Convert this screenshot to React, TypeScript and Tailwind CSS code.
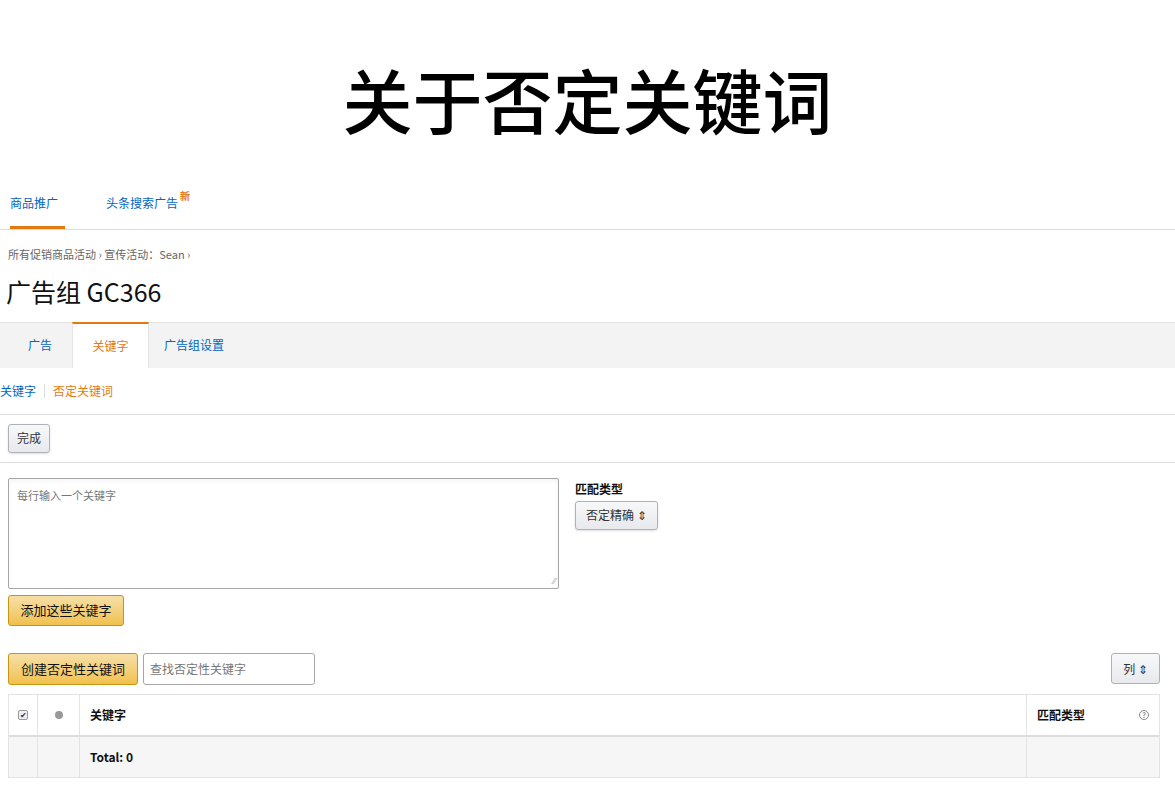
import React from "react";

const F = { fontFamily: '"Noto Sans CJK SC", "Liberation Sans", sans-serif' };

export default function App() {
  return (
    <div className="w-[1175px] h-[802px] bg-white overflow-hidden text-[#333]" style={F}>
      <div className="h-[180px] flex items-center justify-center pt-[18px]">
        <h1 className="text-[70px] leading-none font-medium text-black tracking-[0px]">关于否定关键词</h1>
      </div>
      <div className="flex items-end h-[50px] border-b border-[#ddd] text-[12px]">
        <div className="ml-[10px] w-[55px] pb-[14px] border-b-[3px] border-[#e47911] text-[#0066c0]">商品推广</div>
        <div className="ml-[41px] pb-[17px] text-[#0066c0] relative">头条搜索广告<span className="absolute -top-[6px] -right-[12px] text-[10px] font-bold text-[#e47911]">新</span></div>
      </div>
      <div className="pl-[8px] pt-[16px] text-[11px] text-[#666]">所有促销商品活动 › 宣传活动：Sean ›</div>
      <div className="pl-[6px] pt-[10px] text-[25px] text-[#111] leading-[36px]">广告组 GC366</div>
      <div className="mt-[13px] h-[46px] bg-[#f3f3f3] border-t border-[#e3e3e3] flex text-[12px] pl-[8px]">
        <div className="w-[64px] flex items-center justify-center text-[#0066c0]">广告</div>
        <div className="w-[77px] flex items-center justify-center bg-white border-t-2 border-[#e47911] border-x border-x-[#e3e3e3] -mt-px text-[#e47911]">关键字</div>
        <div className="w-[90px] flex items-center justify-center text-[#0066c0]">广告组设置</div>
      </div>
      <div className="h-[47px] border-b border-[#ddd] flex items-center text-[12px]">
        <span className="text-[#0066c0]">关键字</span>
        <span className="mx-[8px] h-[14px] border-l border-[#ddd]" />
        <span className="text-[#e47911]">否定关键词</span>
      </div>
      <div className="h-[48px] border-b border-[#ddd] flex items-center pl-[8px]">
        <button className="h-[29px] px-[8px] text-[12px] border border-[#adb1b8] rounded-[3px] bg-gradient-to-b from-[#f7f8fa] to-[#e7e9ec] shadow-sm">完成</button>
      </div>
      <div className="flex pl-[8px] pt-[15px]">
        <div className="w-[551px] h-[111px] border border-[#a6a6a6] rounded-[2px] p-[8px] text-[11px] text-[#777] relative shadow-inner">
          每行输入一个关键字
          <span className="absolute right-[2px] bottom-[0px] text-[9px] text-[#aaa]">⁄⁄</span>
        </div>
        <div className="ml-[16px] pt-[2px]">
          <div className="text-[12px] font-bold text-[#111]">匹配类型</div>
          <button className="mt-[3px] h-[29px] px-[10px] text-[12px] border border-[#adb1b8] rounded-[3px] bg-gradient-to-b from-[#f7f8fa] to-[#e7e9ec] shadow-sm">否定精确 ⇕</button>
        </div>
      </div>
      <div className="pl-[8px] pt-[6px]">
        <button className="h-[31px] w-[116px] text-[13px] text-[#111] border border-[#c89411] rounded-[3px] bg-gradient-to-b from-[#f7dfa5] to-[#f0c14b]">添加这些关键字</button>
      </div>
      <div className="flex items-center pl-[8px] pr-[15px] pt-[27px]">
        <button className="h-[32px] w-[130px] text-[13px] text-[#111] border border-[#c89411] rounded-[3px] bg-gradient-to-b from-[#f7dfa5] to-[#f0c14b]">创建否定性关键词</button>
        <div className="ml-[5px] w-[172px] h-[32px] border border-[#a6a6a6] rounded-[3px] flex items-center px-[6px] text-[12px] text-[#777]">查找否定性关键字</div>
        <div className="flex-1" />
        <button className="h-[31px] w-[49px] text-[12px] border border-[#adb1b8] rounded-[3px] bg-gradient-to-b from-[#f7f8fa] to-[#e7e9ec]">列 ⇕</button>
      </div>
      <div className="ml-[8px] mr-[15px] mt-[9px] border border-[#e3e3e3] text-[12px]">
        <div className="flex h-[42px] border-b-2 border-[#ddd]">
          <div className="w-[29px] flex items-center justify-center border-r border-[#e3e3e3]"><span className="w-[10px] h-[10px] border border-[#999] rounded-[2px] text-[8px] leading-[8px] text-center bg-[#eee]">✔</span></div>
          <div className="w-[42px] flex items-center justify-center border-r border-[#e3e3e3]"><span className="w-[8px] h-[8px] rounded-full bg-[#999]" /></div>
          <div className="flex-1 flex items-center pl-[10px] font-bold text-[#111] border-r border-[#e3e3e3]">关键字</div>
          <div className="w-[132px] flex items-center justify-between pl-[10px] pr-[10px] font-bold text-[#111]">匹配类型<span className="w-[10px] h-[10px] rounded-full border border-[#888] text-[7px] leading-[8px] text-center text-[#888]">?</span></div>
        </div>
        <div className="flex h-[40px] bg-[#f6f6f6]">
          <div className="w-[29px] border-r border-[#e3e3e3]" />
          <div className="w-[42px] border-r border-[#e3e3e3]" />
          <div className="flex-1 flex items-center pl-[10px] font-bold text-[#111] border-r border-[#e3e3e3]">Total: 0</div>
          <div className="w-[132px]" />
        </div>
      </div>
    </div>
  );
}
